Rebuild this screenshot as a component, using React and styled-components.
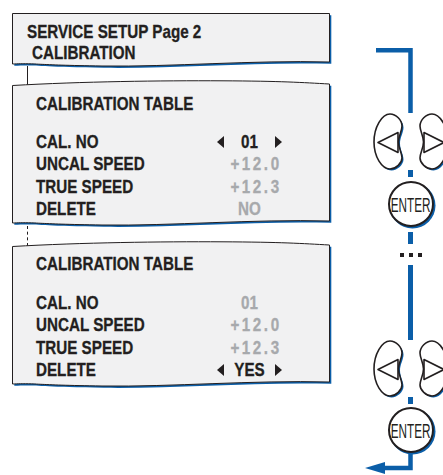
import React from "react";
import styled, { createGlobalStyle } from "styled-components";

const BLUE = "#0b5ea8";
const INK = "#231f20";
const GREY = "#a7a9ac";
const PAPER = "#f1f1f2";
const FONT = `"Liberation Sans", Arial, sans-serif`;
// condensed face is not installed, so the type is squeezed by hand
const SQUEEZE = 0.8;

const Global = createGlobalStyle`
  html, body { margin: 0; padding: 0; background: #fff; overflow: hidden; }
  body { font-family: ${FONT}; color: ${INK}; }
`;

const Page = styled.div`
  display: flex;
  width: 443px;
  height: 475px;
  overflow: hidden;
`;

const Screens = styled.div`
  display: flex;
  flex-direction: column;
  width: 318px;
  margin: 13px 0 0 12px;
  flex-shrink: 0;
`;

const Panel = styled.div`
  position: relative;
  z-index: 1;
  height: ${(p) => p.$h}px;
  padding: ${(p) => p.$pad}px 0 0 ${(p) => p.$left}px;
  box-sizing: border-box;
  font-size: 19px;
  font-weight: bold;
  -webkit-text-stroke: 0.3px currentColor;
`;

const Sheet = styled.svg`
  position: absolute;
  left: 0;
  top: 0;
  z-index: -1;
  overflow: visible;
`;

const Narrow = styled.span`
  display: inline-block;
  white-space: pre;
  transform: scaleX(${SQUEEZE});
  transform-origin: left center;
`;

const Heading = styled.div`
  line-height: 20.5px;
  white-space: nowrap;
  padding-left: ${(p) => p.$indent || 0}px;
`;

const Table = styled.div`
  margin-top: ${(p) => p.$gap}px;
`;

const Row = styled.div`
  display: grid;
  grid-template-columns: 181px 65px;
  line-height: 22.5px;
  white-space: nowrap;
`;

const ValueCell = styled.div`
  display: flex;
  align-items: center;
  justify-content: space-between;
`;

const Value = styled.span`
  flex: 1;
  display: inline-block;
  text-align: center;
  transform: scaleX(${SQUEEZE});
  color: ${(p) => (p.$active ? INK : GREY)};
  letter-spacing: ${(p) => (p.$spaced ? "3.2px" : "0")};
`;

const Pointer = styled.svg`
  width: 7px;
  height: 12px;
  flex-shrink: 0;
  visibility: ${(p) => (p.$show ? "visible" : "hidden")};
`;

const Connector = styled.div`
  position: relative;
  z-index: 0;
  height: ${(p) => p.$h}px;
  &::before {
    content: "";
    position: absolute;
    left: 15px;
    top: -3px;
    bottom: -5px;
    border-left: 1px ${(p) => (p.$dashed ? "dashed" : "solid")} ${INK};
  }
`;

const Keys = styled.div`
  display: flex;
  flex-direction: column;
  align-items: center;
  width: 101px;
  margin-left: 30px;
  padding-top: 48px;
  flex-shrink: 0;
`;

const Dash = styled.div`
  width: 4.5px;
  height: ${(p) => p.$h}px;
  margin-top: ${(p) => p.$top || 0}px;
  background: ${BLUE};
`;

const EnterKey = styled.div`
  width: 46px;
  height: 46px;
  margin-top: ${(p) => p.$top}px;
  box-sizing: border-box;
  border: 2px solid ${INK};
  border-radius: 50%;
  background: #fff;
  box-shadow: 1.5px 1.5px 0 ${BLUE};
  display: flex;
  align-items: center;
  justify-content: center;
  span {
    flex-shrink: 0;
    font-size: 21px;
    line-height: 1;
    transform: scaleX(0.56);
  }
`;

const Dots = styled.div`
  display: flex;
  gap: 5px;
  margin-top: 9px;
  i {
    width: 4px;
    height: 4px;
    background: ${INK};
  }
`;

function sheetPath(hb, wavyTop) {
  const top = wavyTop
    ? "M0.5,5.5 C70,1.5 150,0.5 210,0.8 S290,2.5 317.5,4"
    : "M0.5,0.5 H317.5";
  return `${top} L317.5,${hb - 4} C240,${hb - 6} 160,${hb + 1} 90,${hb} S25,${hb - 3} 0.5,${hb - 2} Z`;
}

function PaperSheet({ h, hb, wavyTop }) {
  const d = sheetPath(hb, wavyTop);
  return (
    <Sheet width="318" height={h} viewBox={`0 0 318 ${h}`}>
      <path d={d} fill={BLUE} transform="translate(1.8 1.8)" />
      <path d={d} fill={PAPER} stroke={INK} strokeWidth="1" />
    </Sheet>
  );
}

function Arrow({ left, show }) {
  return (
    <Pointer $show={show} viewBox="0 0 7 12">
      <polygon points={left ? "7,0 0,6 7,12" : "0,0 7,6 0,12"} fill={INK} />
    </Pointer>
  );
}

function Setting({ label, value, active, spaced }) {
  return (
    <Row>
      <span>
        <Narrow>{label}</Narrow>
      </span>
      <ValueCell>
        <Arrow left show={active} />
        <Value $active={active} $spaced={spaced}>{value}</Value>
        <Arrow show={active} />
      </ValueCell>
    </Row>
  );
}

const BUTTON =
  "M17,1 C9,1 1,14 1,29 C1,44 9,56 17,56 C23,56 29,50 29,45 C29,40 25.5,35 25.5,29 C25.5,23 29,18 29,13 C29,7 23,1 17,1 Z";

function Button({ x, flip }) {
  const t = flip ? `translate(${x + 30} 0) scale(-1 1)` : `translate(${x} 0)`;
  return (
    <g transform={t}>
      <path d={BUTTON} fill={BLUE} transform={`translate(${flip ? -1.5 : 1.5} 1.5)`} />
      <path d={BUTTON} fill="#fff" stroke={INK} strokeWidth="1.6" />
      <path d="M5,29.5 L25,19.5 L25,39.5 Z" fill="none" stroke={INK} strokeWidth="1.6" strokeLinejoin="round" />
    </g>
  );
}

function ArrowPair() {
  return (
    <svg width="101" height="59" viewBox="0 0 101 59" style={{ marginBottom: -2 }}>
      <Button x={13} />
      <Button x={59} flip />
    </svg>
  );
}

function Keypad({ enterTop }) {
  return (
    <>
      <ArrowPair />
      <Dash $h={7} />
      <EnterKey $top={enterTop}>
        <span>ENTER</span>
      </EnterKey>
    </>
  );
}

export default function App() {
  return (
    <Page>
      <Global />
      <Screens>
        <Panel $h={56} $pad={9} $left={15}>
          <PaperSheet h={56} hb={53} />
          <Heading>
            <Narrow>SERVICE SETUP Page 2</Narrow>
          </Heading>
          <Heading $indent={4.5}>
            <Narrow>CALIBRATION</Narrow>
          </Heading>
        </Panel>
        <Connector $h={11} />
        <Panel $h={149} $pad={13.8} $left={24}>
          <PaperSheet h={149} hb={145} wavyTop />
          <Heading>
            <Narrow>CALIBRATION TABLE</Narrow>
          </Heading>
          <Table $gap={16.5}>
            <Setting label="CAL. NO" value="01" active />
            <Setting label="UNCAL SPEED" value="+12.0" spaced />
            <Setting label="TRUE SPEED" value="+12.3" spaced />
            <Setting label="DELETE" value="NO" />
          </Table>
        </Panel>
        <Connector $h={12} $dashed />
        <Panel $h={149} $pad={12.5} $left={24}>
          <PaperSheet h={149} hb={145} wavyTop />
          <Heading>
            <Narrow>CALIBRATION TABLE</Narrow>
          </Heading>
          <Table $gap={17.5}>
            <Setting label="CAL. NO" value="01" />
            <Setting label="UNCAL SPEED" value="+12.0" spaced />
            <Setting label="TRUE SPEED" value="+12.3" spaced />
            <Setting label="DELETE" value="YES" active />
          </Table>
        </Panel>
      </Screens>
      <Keys>
        <svg width="101" height="65" viewBox="0 0 101 65">
          <path d="M16,2.2 H50.5 V65" fill="none" stroke={BLUE} strokeWidth="4.5" />
        </svg>
        <Keypad enterTop={4} />
        <Dash $h={12} $top={5} />
        <Dots>
          <i />
          <i />
          <i />
        </Dots>
        <Dash $h={75} $top={8} />
        <Keypad enterTop={3} />
        <svg width="101" height="22" viewBox="0 0 101 22">
          <path d="M50.5,0 V15 H24" fill="none" stroke={BLUE} strokeWidth="4.5" />
          <polygon points="5,15 25,9 25,21" fill={BLUE} />
        </svg>
      </Keys>
    </Page>
  );
}
